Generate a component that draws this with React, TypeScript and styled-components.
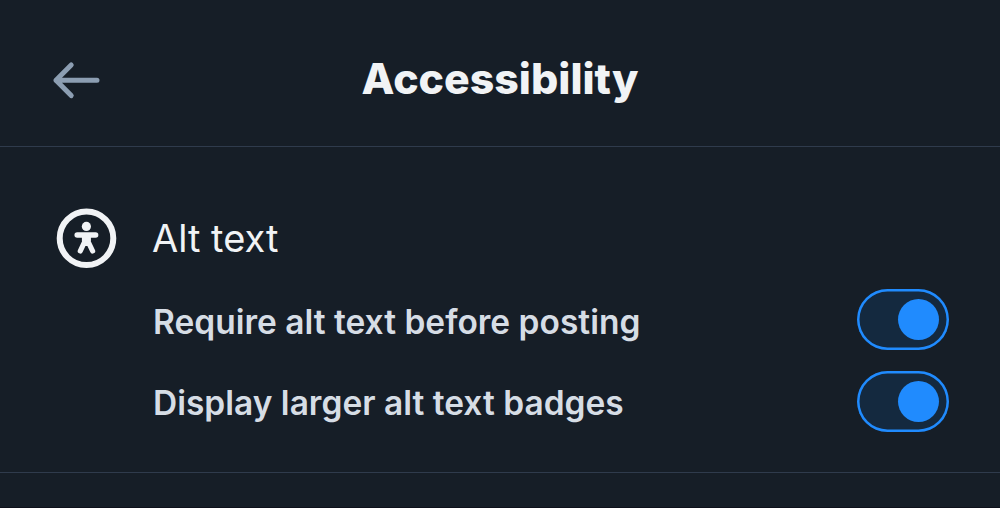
import React, { useState } from 'react'
import styled, { createGlobalStyle } from 'styled-components'

const GlobalStyle = createGlobalStyle`
  * {
    box-sizing: border-box;
  }
  body {
    margin: 0;
    background: #161e27;
    font-family: Inter, 'Liberation Sans', sans-serif;
  }
`

const ScreenWrapper = styled.div`
  width: 100%;
  height: 508px;
  overflow: hidden;
  background: #161e27;
  border-bottom: 1px solid #0e111b;
`

const Header = styled.header`
  display: grid;
  grid-template-columns: 60px 1fr 60px;
  align-items: center;
  height: 147px;
  padding: 13px 46px 0;
  border-bottom: 1px solid #2f3b4c;
`

const BackButton = styled.button`
  display: flex;
  justify-content: center;
  align-items: center;
  height: 60px;
  padding: 0;
  border: 0;
  background: none;
  color: #8c9eb2;
`

const Title = styled.h1`
  margin: 0;
  padding-bottom: 1px;
  text-align: center;
  font-size: 42.8px;
  line-height: 56px;
  font-weight: 800;
  color: #f1f3f5;
`

const Section = styled.section`
  height: 326px;
  padding: 58px 51px 0 53px;
  border-bottom: 1px solid #2f3b4c;
`

const SectionHeader = styled.div`
  display: flex;
  align-items: center;
  gap: 33px;
  height: 66px;
`

const SectionTitle = styled.h2`
  margin: 0;
  font-size: 38px;
  line-height: 50px;
  font-weight: 400;
  color: #f1f3f5;
`

const SettingList = styled.div`
  display: flex;
  flex-direction: column;
  gap: 20.5px;
  padding: 18px 0 0 100px;
`

const SettingRow = styled.div`
  display: flex;
  justify-content: space-between;
  align-items: center;
  height: 61px;
`

const SettingLabel = styled.span`
  padding-top: 4px;
  font-size: 33.5px;
  line-height: 44px;
  font-weight: 600;
  color: #d6dde5;
`

const Toggle = styled.button<{ $on: boolean }>`
  display: flex;
  justify-content: ${({ $on }) => ($on ? 'flex-end' : 'flex-start')};
  align-items: center;
  width: 92px;
  height: 61px;
  padding: 0 10px;
  border: 0;
  border-radius: 31px;
  background: ${({ $on }) => ($on ? '#14293f' : '#1c2733')};
  box-shadow: inset 0 0 0 2.5px ${({ $on }) => ($on ? '#208bfe' : '#485b6e')};
`

const Knob = styled.span<{ $on: boolean }>`
  width: 41px;
  height: 41px;
  border-radius: 50%;
  background: ${({ $on }) => ($on ? '#208bfe' : '#8c9eb2')};
`

function BackIcon() {
  return (
    <svg width="50" height="40" viewBox="0 0 50 40" fill="none" stroke="currentColor" strokeWidth="5" strokeLinecap="round" strokeLinejoin="round">
      <path d="M20.2 5 5 20.2 20.2 35.6M5 20.2H46" />
    </svg>
  )
}

function AccessibilityIcon() {
  return (
    <svg width="66" height="66" viewBox="0 0 66 66" fill="none" stroke="#f1f3f5" strokeLinecap="round" strokeLinejoin="round">
      <circle cx="33.5" cy="33.3" r="26.8" strokeWidth="6" />
      <circle cx="33.4" cy="21.4" r="4.6" fill="#f1f3f5" stroke="none" />
      <path d="M24.2 30H42.6" strokeWidth="5.5" />
      <path d="M31.5 31V37L27.3 46M35.3 31V37L39.6 46M33.4 31V38.5" strokeWidth="5.2" />
    </svg>
  )
}

export default function App() {
  const [requireAlt, setRequireAlt] = useState(true)
  const [largeBadges, setLargeBadges] = useState(true)

  const settings = [
    { label: 'Require alt text before posting', value: requireAlt, onChange: setRequireAlt },
    { label: 'Display larger alt text badges', value: largeBadges, onChange: setLargeBadges },
  ]

  return (
    <ScreenWrapper>
      <GlobalStyle />
      <Header>
        <BackButton>
          <BackIcon />
        </BackButton>
        <Title>Accessibility</Title>
      </Header>
      <Section>
        <SectionHeader>
          <AccessibilityIcon />
          <SectionTitle>Alt text</SectionTitle>
        </SectionHeader>
        <SettingList>
          {settings.map((item) => (
            <SettingRow key={item.label}>
              <SettingLabel>{item.label}</SettingLabel>
              <Toggle $on={item.value} onClick={() => item.onChange(!item.value)}>
                <Knob $on={item.value} />
              </Toggle>
            </SettingRow>
          ))}
        </SettingList>
      </Section>
    </ScreenWrapper>
  )
}
